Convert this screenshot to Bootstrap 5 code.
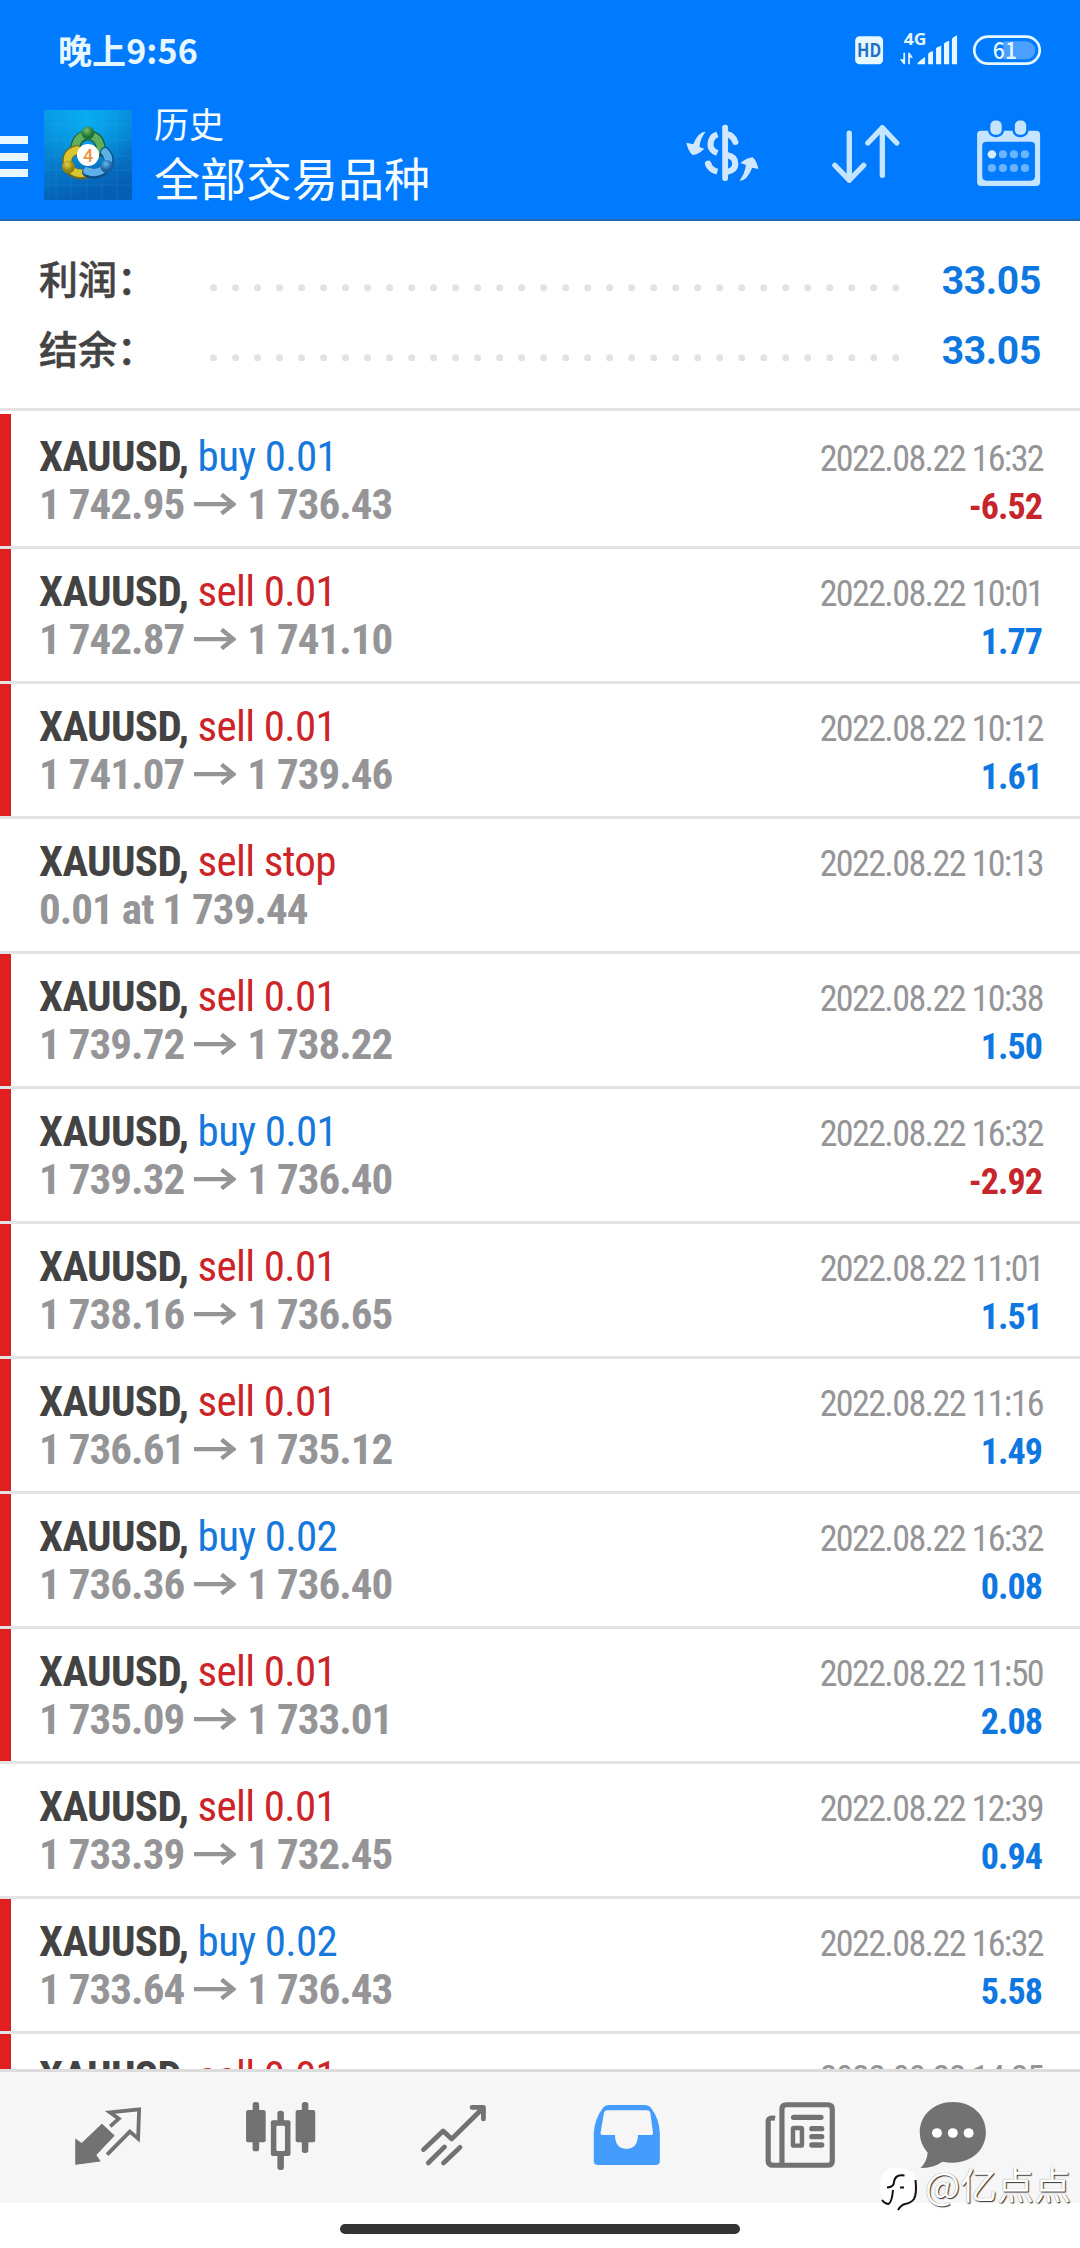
<!DOCTYPE html>
<html lang="zh-CN">
<head>
<meta charset="utf-8">
<meta name="viewport" content="width=device-width, initial-scale=1">
<title>历史</title>
<link rel="stylesheet" href="https://cdn.jsdelivr.net/npm/bootstrap@5.3.0/dist/css/bootstrap.min.css">
<style>
:root{--cjk:"Noto Sans CJK SC",sans-serif}
body{font-family:"Roboto Condensed",Roboto,var(--cjk);color:#434343}
svg{display:block;flex:none;overflow:visible}
.screen{width:1080px;height:2248px}
.top{height:221px;background:#007aff;border-bottom:2px solid #2068b4;color:#e6f7ff;font-family:var(--cjk)}
.statusbar{height:71px;padding:0 37px 0 58px}
.clock{font-size:34px;font-weight:700;line-height:50px;padding-top:25px;letter-spacing:.1px}
.appbar{height:148px;padding-right:37px;color:#f4fcff}
.burger{width:28px;height:41px;margin-top:65px}
.burger i{display:block;height:8px;background:#e6f7ff}
.titles{margin-left:22px}
.sub-t{font-size:35px;line-height:40px;padding-top:32px}
.main-t{font-size:46px;line-height:60px;padding-top:3px}
.summary{height:190px;padding:25px 39px 0 39px;border-bottom:3px solid #e3e3e3;margin-bottom:3px}
.sum-line{height:70px}
.sum-label{font:500 39px/62px var(--cjk);width:168px;white-space:nowrap;-webkit-text-stroke:.5px #434343}
.sum-val{font:700 39px/70px Roboto,sans-serif;color:#0f78e0;letter-spacing:-.3px}
.deals{height:1655px}
.deal{height:135px;border-bottom:3px solid #e3e3e3;padding:18px 38px 0 28px;flex:none;color:#959598}
.deal::before{content:"";width:11px;height:132px;margin:-18px 0 -18px -28px;flex:none}
.deal.hit::before{background:#e02020}
.deal-body{margin-left:28px}
.deal-line{height:48px;font-size:43px;line-height:48px;white-space:nowrap;letter-spacing:-.65px}
.deal-line.fw-bold{letter-spacing:-.95px}
.sym{color:#434343;font-weight:700}
.buy{color:#1578dc}
.sell{color:#cc2428}
.when,.gain{font-size:36px}
.when{letter-spacing:-1.6px;margin-right:-1px}
.gain{color:#0f78e0;letter-spacing:-.95px}
.loss{color:#c6252b}
.arr{display:inline-block;width:42px;height:22px;margin:0 11px 0 10px;vertical-align:4px}
.tabs{height:134px;background:#f6f6f6;border-top:3px solid #dcdcdc;padding:28px 0 0 72px}
.home{width:400px;height:10px;background:#333;border-radius:5px;margin:21px 0 0 340px}
.mark-by{right:9px;top:2160px;color:#fff;font:400 37px/48px var(--cjk);text-shadow:1px 1px 1px #333,0 0 1px #888}
</style>
</head>
<body>
<svg width="0" height="0" class="position-absolute"><defs>
<symbol id="arrow" viewBox="0 0 42 22"><path d="M0 11.2H39M27.500 1.500L39.500 11.200L27.500 20.500" fill="none" stroke="#959598" stroke-width="4.300"/></symbol>
</defs></svg>
<div class="screen position-relative overflow-hidden bg-white d-flex flex-column">

<header class="top flex-shrink-0">
  <div class="statusbar d-flex justify-content-between align-items-start">
    <div class="clock">晚上9:56</div>
    <svg style="margin-top:31.700px" width="192.800" height="35" viewBox="900 95 560 105" preserveAspectRatio="none">
      <rect x="915" y="108" width="81" height="84" rx="13" fill="#e6f7ff"/>
      <text x="955.500" y="171" font-family="Noto Sans CJK SC" font-weight="700" font-size="54" textLength="70" lengthAdjust="spacingAndGlyphs" text-anchor="middle" fill="#1f6fc8">HD</text>
      <text x="1056" y="135" font-family="Open Sans,sans-serif" font-weight="700" font-size="48" textLength="66" lengthAdjust="spacingAndGlyphs" fill="#e6f7ff">4G</text>
      <path d="M1055 157h5v35h-4l-11-15h10zM1069 192v-35h4l10 15h-9v20z" fill="#e6f7ff"/>
      <path d="M1095 192q2-8 23-22v22zM1127 192v-32q2-4 14-8v40zM1150 192v-48q2-4 15-8v56zM1173 192v-62q2-4 15-9v71zM1196 192v-76q2-5 15-11v87z" fill="#e6f7ff"/>
      <rect x="1261" y="109" width="190" height="81" rx="40" fill="none" stroke="#e6f7ff" stroke-width="8"/>
      <path d="M1345 123h66a27 27 0 0 1 0 54h-66z" fill="#4ba0ff"/>
      <text x="1350" y="177" font-family="Noto Sans CJK SC" font-weight="500" font-size="70" textLength="70" lengthAdjust="spacingAndGlyphs" text-anchor="middle" fill="#e6f7ff">61</text>
    </svg>
  </div>
  <div class="appbar d-flex align-items-start">
    <div class="burger d-flex flex-column justify-content-between"><i></i><i></i><i></i></div>
    <svg style="margin:39px 0 0 16px" width="88" height="90" viewBox="0 0 88 90">
      <defs>
        <linearGradient id="sky" x1="0" y1="0" x2=".3" y2="1"><stop offset="0" stop-color="#0a97e6"/><stop offset=".45" stop-color="#0784d2"/><stop offset="1" stop-color="#055fb4"/></linearGradient>
        <radialGradient id="glow" cx=".48" cy=".1" r=".6"><stop offset="0" stop-color="#08b0f4" stop-opacity=".9"/><stop offset="1" stop-color="#08b0f4" stop-opacity="0"/></radialGradient>
        <radialGradient id="gr" cx=".4" cy=".3"><stop offset="0" stop-color="#7cc06a"/><stop offset="1" stop-color="#1b7238"/></radialGradient>
        <radialGradient id="ye" cx=".4" cy=".3"><stop offset="0" stop-color="#e4cf4a"/><stop offset="1" stop-color="#8f8112"/></radialGradient>
        <radialGradient id="bl" cx=".4" cy=".3"><stop offset="0" stop-color="#63b9ee"/><stop offset="1" stop-color="#155f9c"/></radialGradient>
      </defs>
      <rect width="88" height="90" fill="url(#sky)"/><rect width="88" height="90" fill="url(#glow)"/>
      <path d="M12 0V90M27 0V90M43 0V90M58 0V90M73 0V90M0 14H88M0 30H88M0 46H88M0 60H88M0 75H88" stroke="#4cc0f0" stroke-opacity=".15" fill="none"/>
      <g fill="none" stroke-linecap="round">
        <path d="M31 40Q32 26 44 25Q57 26 57 42" stroke="#1c5c3c" stroke-width="10"/>
        <path d="M31 38Q33 25 44 25Q56 26 57 40" stroke="#5fb05c" stroke-width="7.500"/>
        <path d="M33 40Q20 43 24 57Q30 66 41 64" stroke="#6f6a18" stroke-width="10"/>
        <path d="M33 40Q21 43 24 56Q30 65 40 63" stroke="#d8c531" stroke-width="7.500"/>
        <path d="M61 42Q69 50 61 59Q53 66 43 62" stroke="#0c4f86" stroke-width="10"/>
        <path d="M61 42Q68 50 61 58Q53 65 43 61" stroke="#5cb0e6" stroke-width="7.500"/>
      </g>
      <circle cx="44" cy="23" r="6.500" fill="url(#gr)"/><circle cx="24.500" cy="57" r="6.500" fill="url(#ye)"/><circle cx="63" cy="56.500" r="6.500" fill="url(#bl)"/>
      <circle cx="44" cy="45" r="11" fill="#fff"/>
      <text x="44" y="51.500" text-anchor="middle" font-family="Roboto" font-weight="500" font-size="18" fill="#ee9240">4</text>
    </svg>
    <div class="titles flex-grow-1">
      <div class="sub-t">历史</div>
      <div class="main-t">全部交易品种</div>
    </div>
    <svg style="margin:47.300px 68.900px 0 0" width="75.800" height="70" viewBox="420 355 220 210" preserveAspectRatio="none">
      <g fill="#d0e7ff">
        <rect x="528" y="375" width="17" height="169" rx="8"/>
        <path d="M480 396Q458 396 444 434L424 429Q428 452 442 466Q460 464 476 447L462 442Q464 416 480 396zM578 543Q600 544 615 504L633 508Q629 486 617 473Q600 474 581 490L597 496Q593 524 578 543z"/>
        <g fill="none" stroke="#d0e7ff" stroke-width="18"><path d="M514 404Q494 412 494 435Q494 452 514 460M487 491Q492 511 514 516"/><path d="M487 492L488 496M566 427Q560 407 541 403" stroke-linecap="round"/><path d="M541 466Q566 470 566 493Q566 512 541 517"/></g>
      </g>
    </svg>
    <svg style="margin:47.300px 72.300px 0 0" width="72.300" height="70" viewBox="840 355 210 210" preserveAspectRatio="none">
      <g fill="none" stroke="#c4e4ff" stroke-width="15.500" stroke-linecap="round" stroke-linejoin="round"><path d="M896 400V542M854 497L896 542L938 497M992 527V384M950 430L992 384L1034 430"/></g>
    </svg>
    <svg style="margin-top:47.300px" width="68.900" height="70" viewBox="1260 355 200 210" preserveAspectRatio="none">
      <path fill="#c4e4ff" fill-rule="evenodd" d="M1280 393H1440Q1452 393 1452 405V547Q1452 559 1440 559H1281Q1269 559 1269 547V405Q1269 393 1280 393zM1296 426Q1284 426 1284 438V530Q1284 543 1297 543H1424Q1437 543 1437 530V438Q1437 426 1425 426z"/>
      <g fill="#c4e4ff" stroke="#007aff" stroke-width="7"><rect x="1304" y="359" width="40" height="50" rx="18"/><rect x="1375" y="359" width="40" height="50" rx="18"/></g>
      <circle cx="1312" cy="464" r="12.500" fill="#d8eeff"/>
      <g fill="#6ab3ff"><circle cx="1344" cy="464" r="12"/><circle cx="1376" cy="464" r="12"/><circle cx="1408" cy="464" r="12"/><circle cx="1312" cy="505" r="12"/><circle cx="1344" cy="505" r="12"/><circle cx="1376" cy="505" r="12"/><circle cx="1408" cy="505" r="12"/></g>
    </svg>
  </div>
</header>

<section class="summary flex-shrink-0">
  <div class="sum-line d-flex">
    <div class="sum-label">利润：</div>
    <svg width="700" height="70"><path d="M6.500 41.700H690" stroke="#e2e2e2" stroke-width="7" stroke-linecap="round" stroke-dasharray="0 22.010"/></svg>
    <div class="sum-val ms-auto">33.05</div>
  </div>
  <div class="sum-line d-flex">
    <div class="sum-label">结余：</div>
    <svg width="700" height="70"><path d="M6.500 41.700H690" stroke="#e2e2e2" stroke-width="7" stroke-linecap="round" stroke-dasharray="0 22.010"/></svg>
    <div class="sum-val ms-auto">33.05</div>
  </div>
</section>

<main class="deals overflow-hidden d-flex flex-column flex-shrink-0">
  <div class="deal hit d-flex"><div class="deal-body flex-grow-1">
    <div class="deal-line d-flex justify-content-between align-items-baseline"><span><span class="sym">XAUUSD,</span> <span class="buy">buy 0.01</span></span><span class="when">2022.08.22 16:32</span></div>
    <div class="deal-line d-flex justify-content-between align-items-baseline fw-bold"><span>1 742.95<svg class="arr"><use href="#arrow"/></svg>1 736.43</span><span class="gain loss">-6.52</span></div></div></div>
  <div class="deal hit d-flex"><div class="deal-body flex-grow-1">
    <div class="deal-line d-flex justify-content-between align-items-baseline"><span><span class="sym">XAUUSD,</span> <span class="sell">sell 0.01</span></span><span class="when">2022.08.22 10:01</span></div>
    <div class="deal-line d-flex justify-content-between align-items-baseline fw-bold"><span>1 742.87<svg class="arr"><use href="#arrow"/></svg>1 741.10</span><span class="gain">1.77</span></div></div></div>
  <div class="deal hit d-flex"><div class="deal-body flex-grow-1">
    <div class="deal-line d-flex justify-content-between align-items-baseline"><span><span class="sym">XAUUSD,</span> <span class="sell">sell 0.01</span></span><span class="when">2022.08.22 10:12</span></div>
    <div class="deal-line d-flex justify-content-between align-items-baseline fw-bold"><span>1 741.07<svg class="arr"><use href="#arrow"/></svg>1 739.46</span><span class="gain">1.61</span></div></div></div>
  <div class="deal d-flex"><div class="deal-body flex-grow-1">
    <div class="deal-line d-flex justify-content-between align-items-baseline"><span><span class="sym">XAUUSD,</span> <span class="sell">sell stop</span></span><span class="when">2022.08.22 10:13</span></div>
    <div class="deal-line d-flex justify-content-between align-items-baseline fw-bold"><span>0.01 at 1 739.44</span></div></div></div>
  <div class="deal hit d-flex"><div class="deal-body flex-grow-1">
    <div class="deal-line d-flex justify-content-between align-items-baseline"><span><span class="sym">XAUUSD,</span> <span class="sell">sell 0.01</span></span><span class="when">2022.08.22 10:38</span></div>
    <div class="deal-line d-flex justify-content-between align-items-baseline fw-bold"><span>1 739.72<svg class="arr"><use href="#arrow"/></svg>1 738.22</span><span class="gain">1.50</span></div></div></div>
  <div class="deal hit d-flex"><div class="deal-body flex-grow-1">
    <div class="deal-line d-flex justify-content-between align-items-baseline"><span><span class="sym">XAUUSD,</span> <span class="buy">buy 0.01</span></span><span class="when">2022.08.22 16:32</span></div>
    <div class="deal-line d-flex justify-content-between align-items-baseline fw-bold"><span>1 739.32<svg class="arr"><use href="#arrow"/></svg>1 736.40</span><span class="gain loss">-2.92</span></div></div></div>
  <div class="deal hit d-flex"><div class="deal-body flex-grow-1">
    <div class="deal-line d-flex justify-content-between align-items-baseline"><span><span class="sym">XAUUSD,</span> <span class="sell">sell 0.01</span></span><span class="when">2022.08.22 11:01</span></div>
    <div class="deal-line d-flex justify-content-between align-items-baseline fw-bold"><span>1 738.16<svg class="arr"><use href="#arrow"/></svg>1 736.65</span><span class="gain">1.51</span></div></div></div>
  <div class="deal hit d-flex"><div class="deal-body flex-grow-1">
    <div class="deal-line d-flex justify-content-between align-items-baseline"><span><span class="sym">XAUUSD,</span> <span class="sell">sell 0.01</span></span><span class="when">2022.08.22 11:16</span></div>
    <div class="deal-line d-flex justify-content-between align-items-baseline fw-bold"><span>1 736.61<svg class="arr"><use href="#arrow"/></svg>1 735.12</span><span class="gain">1.49</span></div></div></div>
  <div class="deal hit d-flex"><div class="deal-body flex-grow-1">
    <div class="deal-line d-flex justify-content-between align-items-baseline"><span><span class="sym">XAUUSD,</span> <span class="buy">buy 0.02</span></span><span class="when">2022.08.22 16:32</span></div>
    <div class="deal-line d-flex justify-content-between align-items-baseline fw-bold"><span>1 736.36<svg class="arr"><use href="#arrow"/></svg>1 736.40</span><span class="gain">0.08</span></div></div></div>
  <div class="deal hit d-flex"><div class="deal-body flex-grow-1">
    <div class="deal-line d-flex justify-content-between align-items-baseline"><span><span class="sym">XAUUSD,</span> <span class="sell">sell 0.01</span></span><span class="when">2022.08.22 11:50</span></div>
    <div class="deal-line d-flex justify-content-between align-items-baseline fw-bold"><span>1 735.09<svg class="arr"><use href="#arrow"/></svg>1 733.01</span><span class="gain">2.08</span></div></div></div>
  <div class="deal d-flex"><div class="deal-body flex-grow-1">
    <div class="deal-line d-flex justify-content-between align-items-baseline"><span><span class="sym">XAUUSD,</span> <span class="sell">sell 0.01</span></span><span class="when">2022.08.22 12:39</span></div>
    <div class="deal-line d-flex justify-content-between align-items-baseline fw-bold"><span>1 733.39<svg class="arr"><use href="#arrow"/></svg>1 732.45</span><span class="gain">0.94</span></div></div></div>
  <div class="deal hit d-flex"><div class="deal-body flex-grow-1">
    <div class="deal-line d-flex justify-content-between align-items-baseline"><span><span class="sym">XAUUSD,</span> <span class="buy">buy 0.02</span></span><span class="when">2022.08.22 16:32</span></div>
    <div class="deal-line d-flex justify-content-between align-items-baseline fw-bold"><span>1 733.64<svg class="arr"><use href="#arrow"/></svg>1 736.43</span><span class="gain">5.58</span></div></div></div>
  <div class="deal hit d-flex"><div class="deal-body flex-grow-1">
    <div class="deal-line d-flex justify-content-between align-items-baseline"><span><span class="sym">XAUUSD,</span> <span class="sell">sell 0.01</span></span><span class="when">2022.08.22 14:25</span></div></div></div>
</main>

<nav class="tabs d-flex flex-shrink-0">
  <svg width="72.300" height="73.300" viewBox="210 360 210 220" preserveAspectRatio="none">
    <path fill="#727272" stroke="#727272" stroke-width="3" stroke-linejoin="round" d="M297 433L332 467L279 525L291 543L221 553V478L238 491z"/>
    <path fill="none" stroke="#727272" stroke-width="11" d="M321 439L346 416L320 397L405 388L402 476L378 455L312 524"/>
  </svg>
  <svg style="margin-left:99.900px" width="74" height="73.300" viewBox="710 360 215 220" preserveAspectRatio="none">
    <g fill="#727272"><rect x="735" y="366" width="19" height="148" rx="8"/><rect x="716" y="390" width="57" height="97" rx="6"/><rect x="878" y="366" width="19" height="153" rx="8"/><rect x="860" y="390" width="57" height="97" rx="6"/><rect x="807" y="392" width="19" height="178" rx="8"/><rect x="788" y="421" width="57" height="107" rx="6"/></g>
    <rect x="804" y="437" width="25" height="76" rx="4" fill="#f6f6f6"/>
  </svg>
  <svg style="margin-left:99.900px" width="70.600" height="73.300" viewBox="1215 360 205 220" preserveAspectRatio="none">
    <path fill="none" stroke="#727272" stroke-width="14" stroke-linecap="round" stroke-linejoin="round" d="M1231 509L1288 453L1313 477L1404 384M1372 382H1405V417M1245 549L1292 501M1289 549L1337 502"/>
  </svg>
  <svg style="margin-left:102.700px" width="72.300" height="73.300" viewBox="690 360 210 220" preserveAspectRatio="none" transform="translate(0)">
    <g transform="translate(540) translate(-540)"><path fill="#459cff" d="M741 375H848Q858 375 864 383Q889 417 890 460V542Q890 555 878 555H711Q698 555 698 542V460Q700 417 725 383Q731 375 741 375z"/>
    <path fill="#f6f6f6" d="M737 391H852Q860 391 862 397L870 457Q871 465 865 465H826V474Q822 507 793 507Q764 507 760 474V465H724Q716 465 718 457L728 397Q730 391 737 391z"/></g>
  </svg>
  <svg style="margin-left:99.800px" width="74.100" height="73.300" viewBox="650 360 215 220" preserveAspectRatio="none">
    <g fill="none" stroke="#727272"><path stroke-width="15" d="M685 415Q665 411 665 424V543Q665 556 680 556H838Q851 556 851 543V387Q851 374 838 374H718Q705 374 705 387V556"/>
    <g stroke-width="16" stroke-linecap="round"><path d="M739 412H818M792 446H820M792 470H820M792 495H820"/></g><rect x="737" y="444" width="26" height="53" stroke-width="13" rx="3"/></g>
  </svg>
  <svg style="margin-left:79.100px" width="70.600" height="73.300" viewBox="1095 360 205 220" preserveAspectRatio="none">
    <path fill="#727272" d="M1199 366C1255 366 1295 405 1295 457C1295 509 1255 548 1199 548Q1183 548 1169 545Q1143 564 1105 564Q1124 545 1126 518Q1103 492 1103 457C1103 405 1145 366 1199 366z"/>
    <g fill="#fff"><circle cx="1153" cy="459" r="14.500"/><circle cx="1199" cy="459" r="14.500"/><circle cx="1245" cy="459" r="14.500"/></g>
  </svg>
</nav>
<div class="home flex-shrink-0"></div>

<div class="mark-by position-absolute d-flex align-items-start">
  <svg width="44" height="48" viewBox="0 0 44 48" style="margin:6px 3px 0 0">
    <path fill="#fff" d="M14 2H24Q39 4 39 20Q39 34 29 36Q24 43 20 45L20 40L12 38Q2 34 2 20Q2 5 14 2z"/>
    <path fill="none" stroke="#111" stroke-width="2" d="M26.500 9.500Q17 8 16 16Q16 21 9 21.500M15 24Q14 36 10.500 38Q7 38 4 34M22 21.500H26M37.500 14Q39 28 36 33Q33 37 27 38Q23 39 20 44"/>
  </svg><span>@亿点点</span>
</div>
</div>
<script src="https://cdn.jsdelivr.net/npm/bootstrap@5.3.0/dist/js/bootstrap.bundle.min.js"></script>
</body>
</html>
